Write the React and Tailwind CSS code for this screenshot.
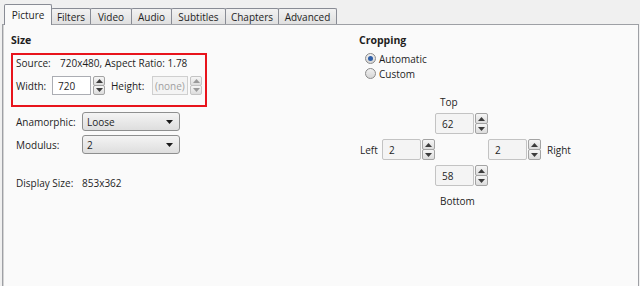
import React from "react";

function Arrow({ up, disabled }) {
  return (
    <svg width="7" height="4" viewBox="0 0 7 4" className="block">
      {up ? (
        <path d="M0 4 L3.5 0 L7 4 Z" fill={disabled ? "#9a9a9a" : "#3c3c3c"} />
      ) : (
        <path d="M0 0 L3.5 4 L7 0 Z" fill={disabled ? "#9a9a9a" : "#3c3c3c"} />
      )}
    </svg>
  );
}

function SpinButtons({ h, w, disabled }) {
  const half = "flex-1 flex items-center justify-center border rounded-[2px] bg-gradient-to-b from-[#f6f6f6] to-[#dcdcdc]";
  return (
    <div className={`flex flex-col ${w} ${h}`}>
      <div className={`${half} ${disabled ? "border-[#c4c4c4]" : "border-[#a3a3a3]"}`}>
        <Arrow up disabled={disabled} />
      </div>
      <div className={`${half} -mt-px ${disabled ? "border-[#c4c4c4]" : "border-[#a3a3a3]"}`}>
        <Arrow disabled={disabled} />
      </div>
    </div>
  );
}

function CropSpin({ value }) {
  return (
    <div className="flex h-[21px] gap-[1px]">
      <div className="w-[39px] h-full border border-[#c3c3c3] bg-[#f4f4f4] pl-[6px] flex items-center rounded-[2px]">
        {value}
      </div>
      <SpinButtons h="h-full" w="w-[13px]" />
    </div>
  );
}

function Select({ value }) {
  return (
    <div className="w-[98px] h-[19px] border border-[#8e8f8f] rounded-[3px] bg-gradient-to-b from-[#f4f4f4] to-[#dedede] flex items-center justify-between pl-[4px] pr-[6px]">
      <span>{value}</span>
      <svg width="7" height="4" viewBox="0 0 7 4">
        <path d="M0 0 L3.5 4 L7 0 Z" fill="#1a1a1a" />
      </svg>
    </div>
  );
}

function Tab({ label, w, selected }) {
  return selected ? (
    <div
      className={`${w} h-[21px] -mb-px relative z-10 border border-b-0 border-[#898c95] bg-[#fafafa] rounded-t-[2px] flex items-start justify-center pt-[3px]`}
    >
      {label}
    </div>
  ) : (
    <div
      className={`${w} h-[16px] -ml-px border border-b-0 border-[#898c95] bg-gradient-to-b from-[#f2f2f2] to-[#e0e0e0] rounded-t-[2px] flex items-center justify-center`}
    >
      {label}
    </div>
  );
}

export default function App() {
  return (
    <div className="w-[640px] h-[286px] overflow-hidden bg-[#f0f0f0] text-[10px] leading-[14px] text-[#1e1e1e] font-['Open_Sans',sans-serif]">
      <div className="h-[24px] pl-[4px] flex items-end">
        <Tab label="Picture" w="w-[48px]" selected />
        <Tab label="Filters" w="w-[40px]" />
        <Tab label="Video" w="w-[42px]" />
        <Tab label="Audio" w="w-[41px]" />
        <Tab label="Subtitles" w="w-[55px]" />
        <Tab label="Chapters" w="w-[54px]" />
        <Tab label="Advanced" w="w-[59px]" />
      </div>
      <div className="ml-[2px] w-[637px] h-[300px] border border-[#9ea0a5] bg-[#fafafa] shadow-[inset_1px_0_0_#d4d4d4] flex">
        {/* left column */}
        <div className="w-[356px] pl-[8px] pt-[8px]">
          <div className="font-bold text-[10.5px]">Size</div>
          <div className="mt-[6px] w-[196px] h-[54px] border-2 border-[#e8141c] pl-[3px] pt-[1px]">
            <div className="flex">
              <span className="w-[44px]">Source:</span>
              <span>720x480, Aspect Ratio: 1.78</span>
            </div>
            <div className="mt-[6px] flex items-center">
              <span className="w-[36px]">Width:</span>
              <div className="w-[39px] h-[19px] border border-[#abadb3] bg-white pl-[5px] flex items-center">720</div>
              <div className="ml-[2px]">
                <SpinButtons h="h-[19px]" w="w-[12px]" />
              </div>
              <span className="ml-[6px] w-[41px]">Height:</span>
              <div className="w-[36px] h-[19px] border border-[#cfcfcf] bg-[#f4f4f4] pl-[2px] flex items-center text-[#a0a0a0] overflow-hidden whitespace-nowrap">(none)</div>
              <div className="ml-[2px]">
                <SpinButtons h="h-[19px]" w="w-[12px]" disabled />
              </div>
            </div>
          </div>
          <div className="mt-[5px] pl-[5px] flex items-center">
            <span className="w-[66px]">Anamorphic:</span>
            <Select value="Loose" />
          </div>
          <div className="mt-[4px] pl-[5px] flex items-center">
            <span className="w-[66px]">Modulus:</span>
            <Select value="2" />
          </div>
          <div className="mt-[22px] pl-[5px] flex">
            <span className="w-[66px]">Display Size:</span>
            <span>853x362</span>
          </div>
        </div>
        {/* right column */}
        <div className="flex-1 pt-[8px]">
          <div className="font-bold text-[10.5px]">Cropping</div>
          <div className="mt-[4px] ml-[6px] flex items-center h-[15px]">
            <span className="w-[11px] h-[11px] rounded-full border border-[#8a8a8a] bg-gradient-to-b from-[#f0f0f0] to-[#d6d6d6] flex items-center justify-center">
              <span className="w-[5px] h-[5px] rounded-full bg-[#2f5fa8]" />
            </span>
            <span className="ml-[3px]">Automatic</span>
          </div>
          <div className="ml-[6px] flex items-center h-[15px]">
            <span className="w-[11px] h-[11px] rounded-full border border-[#8a8a8a] bg-gradient-to-b from-[#f0f0f0] to-[#d6d6d6]" />
            <span className="ml-[3px]">Custom</span>
          </div>
          <div className="mt-[14px] ml-[81px]">Top</div>
          <div className="mt-[4px] ml-[76px]">
            <CropSpin value="62" />
          </div>
          <div className="mt-[5px] flex items-center">
            <span className="w-[23px] pl-[1px]">Left</span>
            <CropSpin value="2" />
            <div className="w-[53px]" />
            <CropSpin value="2" />
            <span className="ml-[6px]">Right</span>
          </div>
          <div className="mt-[5px] ml-[76px]">
            <CropSpin value="58" />
          </div>
          <div className="mt-[8px] ml-[81px]">Bottom</div>
        </div>
      </div>
    </div>
  );
}
